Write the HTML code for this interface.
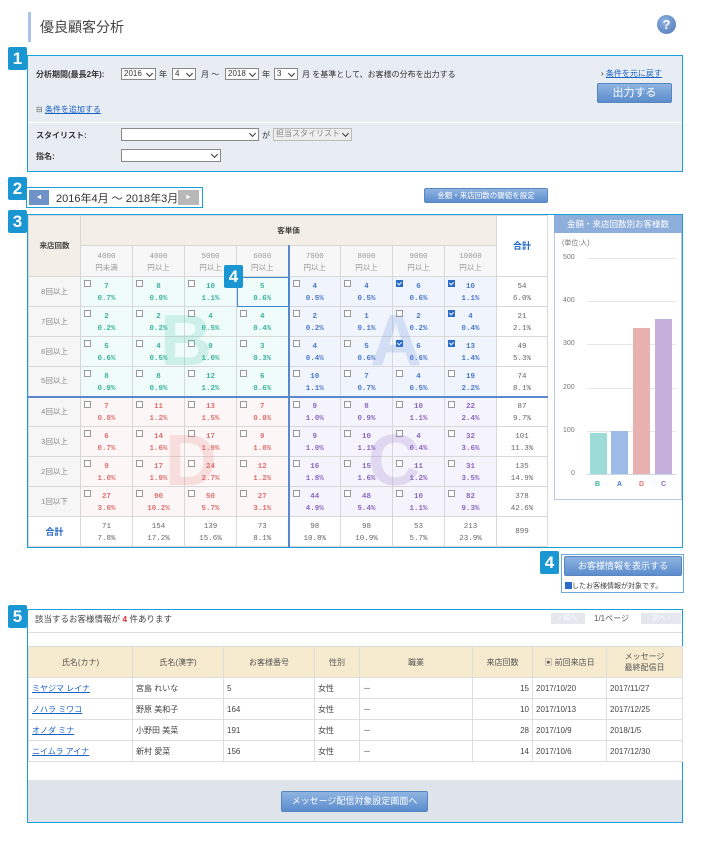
<!DOCTYPE html>
<html><head><meta charset="utf-8">
<style>
*{box-sizing:border-box;margin:0;padding:0}
body{width:710px;height:844px;background:#fff;font-family:"Liberation Sans","Noto Sans CJK JP",sans-serif;color:#333;position:relative;overflow:hidden;font-size:8px}
.abs{position:absolute}
.badge{position:absolute;width:19px;height:23px;background:#1a96d2;color:#fff;font-size:17px;font-weight:bold;text-align:center;line-height:23px;border-radius:2px;z-index:5}
.box{position:absolute;border:1px solid #1aa0d8}
.sel{position:absolute;height:12px;border:1px solid #888;background:#fff;font-size:8px;line-height:10px;padding-left:2px}
.sel:after{content:"";position:absolute;right:3px;top:2px;width:4px;height:4px;border-right:1.5px solid #333;border-bottom:1.5px solid #333;transform:rotate(45deg)}
.btn{position:absolute;background:linear-gradient(#8fb4e2,#5b8ccc);color:#fff;text-align:center;border-radius:2px;border:1px solid #5a86c0}
a,.lk{color:#1a62c4;text-decoration:underline}
table.g{position:absolute;left:28px;top:215px;border-collapse:collapse;table-layout:fixed;font-family:"Liberation Mono","Noto Sans CJK JP",monospace}
table.g td{border:1px solid #d8d8d8;height:30px;text-align:center;font-size:7.5px;line-height:12px;position:relative;font-weight:bold;padding-top:3px}
table.g td i{position:absolute;left:3px;top:3px;width:7px;height:7px;border:1px solid #999;background:#fff}
table.g td i.k{border-color:#2a6cc8;background:#2a6cc8}
table.g td i.k:after{content:"";position:absolute;left:1px;top:0;width:2px;height:3px;border-right:1px solid #fff;border-bottom:1px solid #fff;transform:rotate(45deg)}
td.rh{background:#f6f6f6;color:#888;font-weight:normal!important;font-family:"Liberation Sans","Noto Sans CJK JP",sans-serif;padding-top:0!important}
td.b{background:#f0fcfa;color:#3bb39d}
td.a{background:#f0f4fd;color:#4a78cc}
td.d{background:#fdf6f6;color:#e07070}
td.c{background:#f5f3fc;color:#8a68c2}
td.t{color:#666;font-weight:normal!important}
tr.sep td{border-top:2px solid #5b88cc}
td.vs{border-left:2px solid #5b88cc!important}
.big{position:absolute;font-size:72px;font-weight:bold;font-family:"Liberation Sans",sans-serif;z-index:1;pointer-events:none}
table.c{position:absolute;left:28px;top:646px;width:654px;border-collapse:collapse;table-layout:fixed;font-size:8px}
table.c td,table.c th{border:1px solid #ddd;height:21px;padding:0 3px;text-align:left;font-weight:normal;color:#444;overflow:hidden;white-space:nowrap}
table.c th{background:#f6ebcf;height:31px;text-align:center;color:#555}
</style></head><body>

<div class="abs" style="left:28px;top:12px;width:3px;height:30px;background:#a9c4e8"></div>
<div class="abs" style="left:40px;top:17px;font-size:14px;color:#444">優良顧客分析</div>
<div class="abs" style="left:657px;top:15px;width:19px;height:19px;border-radius:50%;background:radial-gradient(circle at 40% 35%,#8fb2e0,#4a74b6);color:#fff;font-size:13px;font-weight:bold;text-align:center;line-height:19px">?</div>

<div class="badge" style="left:8px;top:47px">1</div>
<div class="box" style="left:27px;top:55px;width:656px;height:117px;background:#e8ecf3"></div>
<div class="abs" style="left:36px;top:69px;font-weight:bold;font-size:8px">分析期間(最長2年):</div>
<div class="sel" style="left:121px;top:68px;width:35px">2016</div>
<div class="abs" style="left:159px;top:69px">年</div>
<div class="sel" style="left:172px;top:68px;width:24px">4</div>
<div class="abs" style="left:201px;top:69px">月 ～</div>
<div class="sel" style="left:225px;top:68px;width:34px">2018</div>
<div class="abs" style="left:262px;top:69px">年</div>
<div class="sel" style="left:274px;top:68px;width:24px">3</div>
<div class="abs" style="left:302px;top:69px">月 を基準として、お客様の分布を出力する</div>
<div class="abs" style="left:601px;top:68px;font-size:8px">› <span class="lk">条件を元に戻す</span></div>
<div class="btn" style="left:597px;top:83px;width:75px;height:20px;font-size:11px;line-height:18px">出力する</div>
<div class="abs" style="left:36px;top:104px;color:#666">⊟ <span class="lk">条件を追加する</span></div>
<div class="abs" style="left:28px;top:122px;width:654px;height:1px;background:#fff"></div>
<div class="abs" style="left:36px;top:130px;font-weight:bold">スタイリスト:</div>
<div class="sel" style="left:121px;top:128px;width:138px;height:13px"></div>
<div class="abs" style="left:262px;top:130px">が</div>
<div class="sel" style="left:273px;top:128px;width:79px;height:13px;background:#eee;border-color:#bbb;color:#888">担当スタイリスト</div>
<div class="abs" style="left:36px;top:151px;font-weight:bold">指名:</div>
<div class="sel" style="left:121px;top:149px;width:100px;height:13px"></div>

<div class="badge" style="left:8px;top:177px">2</div>
<div class="box" style="left:26px;top:187px;width:177px;height:21px"></div>
<div class="abs" style="left:29px;top:190px;width:20px;height:15px;background:#6f92c8;color:#fff;font-size:7px;text-align:center;line-height:15px">◄</div>
<div class="abs" style="left:56px;top:190px;font-size:11px;color:#333">2016年4月 ～ 2018年3月</div>
<div class="abs" style="left:178px;top:190px;width:21px;height:15px;background:#b8b8b8;color:#fff;font-size:7px;text-align:center;line-height:15px">►</div>
<div class="btn" style="left:424px;top:188px;width:124px;height:15px;font-size:7.5px;line-height:13px">金額・来店回数の閾値を設定</div>

<div class="badge" style="left:8px;top:210px">3</div>
<div class="box" style="left:27px;top:214px;width:656px;height:334px"></div>
<div class="big" style="left:160px;top:300px;color:rgba(80,200,180,.22)">B</div>
<div class="big" style="left:370px;top:300px;color:rgba(90,130,220,.2)">A</div>
<div class="big" style="left:165px;top:420px;color:rgba(230,110,110,.18)">D</div>
<div class="big" style="left:368px;top:420px;color:rgba(140,110,200,.2)">C</div>
<table class="g">
<colgroup><col style="width:52px"><col style="width:52px"><col style="width:52px"><col style="width:52px"><col style="width:52px"><col style="width:52px"><col style="width:52px"><col style="width:52px"><col style="width:52px"><col style="width:51px"></colgroup>
<tr><td rowspan="2" class="rh" style="background:#f3efe6;color:#444;font-weight:bold!important">来店回数</td><td colspan="8" style="background:#f3efe6;color:#444;font-family:'Liberation Sans','Noto Sans CJK JP',sans-serif;height:30px;padding:0">客単価</td><td rowspan="2" style="background:#fff;color:#1a62c4;font-size:9px;font-family:'Liberation Sans','Noto Sans CJK JP',sans-serif;padding:0">合計</td></tr>
<tr style="height:31px"><td class="t" style="background:#f7f7f7;color:#999">4000<br>円未満</td><td class="t" style="background:#f7f7f7;color:#999">4000<br>円以上</td><td class="t" style="background:#f7f7f7;color:#999">5000<br>円以上</td><td class="t" style="background:#f7f7f7;color:#999">6000<br>円以上</td><td class="t vs" style="background:#f7f7f7;color:#999">7000<br>円以上</td><td class="t" style="background:#f7f7f7;color:#999">8000<br>円以上</td><td class="t" style="background:#f7f7f7;color:#999">9000<br>円以上</td><td class="t" style="background:#f7f7f7;color:#999">10000<br>円以上</td></tr>
<tr><td class="rh">8回以上</td><td class="b"><i></i>7<br>0.7%</td><td class="b"><i></i>8<br>0.9%</td><td class="b"><i></i>10<br>1.1%</td><td class="b" style="outline:1.5px solid #3a8ad8;outline-offset:-1px">5<br>0.6%</td><td class="a vs"><i></i>4<br>0.5%</td><td class="a"><i></i>4<br>0.5%</td><td class="a"><i class="k"></i>6<br>0.6%</td><td class="a"><i class="k"></i>10<br>1.1%</td><td class="t">54<br>6.0%</td></tr>
<tr><td class="rh">7回以上</td><td class="b"><i></i>2<br>0.2%</td><td class="b"><i></i>2<br>0.2%</td><td class="b"><i></i>4<br>0.5%</td><td class="b"><i></i>4<br>0.4%</td><td class="a vs"><i></i>2<br>0.2%</td><td class="a"><i></i>1<br>0.1%</td><td class="a"><i></i>2<br>0.2%</td><td class="a"><i class="k"></i>4<br>0.4%</td><td class="t">21<br>2.1%</td></tr>
<tr><td class="rh">6回以上</td><td class="b"><i></i>5<br>0.6%</td><td class="b"><i></i>4<br>0.5%</td><td class="b"><i></i>9<br>1.0%</td><td class="b"><i></i>3<br>0.3%</td><td class="a vs"><i></i>4<br>0.4%</td><td class="a"><i></i>5<br>0.6%</td><td class="a"><i class="k"></i>6<br>0.6%</td><td class="a"><i class="k"></i>13<br>1.4%</td><td class="t">49<br>5.3%</td></tr>
<tr><td class="rh">5回以上</td><td class="b"><i></i>8<br>0.9%</td><td class="b"><i></i>8<br>0.9%</td><td class="b"><i></i>12<br>1.2%</td><td class="b"><i></i>6<br>0.6%</td><td class="a vs"><i></i>10<br>1.1%</td><td class="a"><i></i>7<br>0.7%</td><td class="a"><i></i>4<br>0.5%</td><td class="a"><i></i>19<br>2.2%</td><td class="t">74<br>8.1%</td></tr>
<tr class="sep"><td class="rh">4回以上</td><td class="d"><i></i>7<br>0.8%</td><td class="d"><i></i>11<br>1.2%</td><td class="d"><i></i>13<br>1.5%</td><td class="d"><i></i>7<br>0.8%</td><td class="c vs"><i></i>9<br>1.0%</td><td class="c"><i></i>8<br>0.9%</td><td class="c"><i></i>10<br>1.1%</td><td class="c"><i></i>22<br>2.4%</td><td class="t">87<br>9.7%</td></tr>
<tr><td class="rh">3回以上</td><td class="d"><i></i>6<br>0.7%</td><td class="d"><i></i>14<br>1.6%</td><td class="d"><i></i>17<br>1.9%</td><td class="d"><i></i>9<br>1.0%</td><td class="c vs"><i></i>9<br>1.0%</td><td class="c"><i></i>10<br>1.1%</td><td class="c"><i></i>4<br>0.4%</td><td class="c"><i></i>32<br>3.6%</td><td class="t">101<br>11.3%</td></tr>
<tr><td class="rh">2回以上</td><td class="d"><i></i>9<br>1.0%</td><td class="d"><i></i>17<br>1.9%</td><td class="d"><i></i>24<br>2.7%</td><td class="d"><i></i>12<br>1.2%</td><td class="c vs"><i></i>16<br>1.8%</td><td class="c"><i></i>15<br>1.6%</td><td class="c"><i></i>11<br>1.2%</td><td class="c"><i></i>31<br>3.5%</td><td class="t">135<br>14.9%</td></tr>
<tr><td class="rh">1回以下</td><td class="d"><i></i>27<br>3.0%</td><td class="d"><i></i>90<br>10.2%</td><td class="d"><i></i>50<br>5.7%</td><td class="d"><i></i>27<br>3.1%</td><td class="c vs"><i></i>44<br>4.9%</td><td class="c"><i></i>48<br>5.4%</td><td class="c"><i></i>10<br>1.1%</td><td class="c"><i></i>82<br>9.3%</td><td class="t">378<br>42.6%</td></tr>
<tr><td class="rh" style="background:#fff;color:#1a62c4;font-weight:bold!important;font-size:9px">合計</td><td class="t">71<br>7.8%</td><td class="t">154<br>17.2%</td><td class="t">139<br>15.6%</td><td class="t">73<br>8.1%</td><td class="t vs">98<br>10.8%</td><td class="t">98<br>10.9%</td><td class="t">53<br>5.7%</td><td class="t">213<br>23.9%</td><td class="t" style="padding-top:0">899</td></tr>
</table>
<div class="badge" style="left:224px;top:265px">4</div>

<div class="abs" style="left:554px;top:215px;width:128px;height:285px;border:1px solid #b8c8e0;background:#fff"></div>
<div class="abs" style="left:554px;top:215px;width:128px;height:18px;background:#8eaedc;color:#fff;font-size:8.5px;text-align:center;line-height:18px">金額・来店回数別お客様数</div>
<div class="abs" style="left:562px;top:238px;color:#777;font-size:7px">(単位:人)</div>
<div class="abs" style="left:563px;top:254px;color:#777;font-size:7px;line-height:8px">500</div>
<div class="abs" style="left:563px;top:297px;color:#777;font-size:7px;line-height:8px">400</div>
<div class="abs" style="left:563px;top:340px;color:#777;font-size:7px;line-height:8px">300</div>
<div class="abs" style="left:563px;top:384px;color:#777;font-size:7px;line-height:8px">200</div>
<div class="abs" style="left:563px;top:427px;color:#777;font-size:7px;line-height:8px">100</div>
<div class="abs" style="left:571px;top:470px;color:#777;font-size:7px;line-height:8px">0</div>
<div class="abs" style="left:587px;top:258px;width:89px;height:1px;background:#e6e6e6"></div>
<div class="abs" style="left:587px;top:301px;width:89px;height:1px;background:#e6e6e6"></div>
<div class="abs" style="left:587px;top:344px;width:89px;height:1px;background:#e6e6e6"></div>
<div class="abs" style="left:587px;top:388px;width:89px;height:1px;background:#e6e6e6"></div>
<div class="abs" style="left:587px;top:431px;width:89px;height:1px;background:#e6e6e6"></div>
<div class="abs" style="left:587px;top:474px;width:89px;height:1px;background:#ccd6e6"></div>
<div class="abs" style="left:590px;top:433px;width:17px;height:41px;background:#9ddcd6"></div>
<div class="abs" style="left:611px;top:431px;width:17px;height:43px;background:#9dbbe6"></div>
<div class="abs" style="left:633px;top:328px;width:17px;height:146px;background:#e8b0ae"></div>
<div class="abs" style="left:655px;top:319px;width:17px;height:155px;background:#c4b0da"></div>
<div class="abs" style="left:595px;top:481px;color:#3bb39d;font-size:7px;font-weight:bold">B</div>
<div class="abs" style="left:617px;top:481px;color:#4a78cc;font-size:7px;font-weight:bold">A</div>
<div class="abs" style="left:639px;top:481px;color:#e07070;font-size:7px;font-weight:bold">D</div>
<div class="abs" style="left:661px;top:481px;color:#8a68c2;font-size:7px;font-weight:bold">C</div>

<div class="badge" style="left:540px;top:551px">4</div>
<div class="box" style="left:561px;top:554px;width:123px;height:39px;border-color:#6aa8e0"></div>
<div class="btn" style="left:564px;top:556px;width:118px;height:20px;font-size:9px;line-height:18px">お客様情報を表示する</div>
<div class="abs" style="left:565px;top:581px;font-size:7px;color:#444"><span style="display:inline-block;width:7px;height:7px;background:#2a6cc8;vertical-align:-1px"></span>したお客様情報が対象です。</div>

<div class="badge" style="left:8px;top:605px">5</div>
<div class="box" style="left:27px;top:609px;width:656px;height:214px"></div>
<div class="abs" style="left:35px;top:613px;font-size:8.5px;color:#444">該当するお客様情報が <b style="color:#e03030">4</b> 件あります</div>
<div class="abs" style="left:551px;top:613px;width:34px;height:11px;background:#e4e8ee;color:#fff;font-size:7px;text-align:center;line-height:11px">‹ 前へ</div>
<div class="abs" style="left:594px;top:613px;font-size:8px;color:#555">1/1ページ</div>
<div class="abs" style="left:641px;top:613px;width:40px;height:11px;background:#e4e8ee;color:#fff;font-size:7px;text-align:center;line-height:11px">次へ ›</div>
<div class="abs" style="left:28px;top:632px;width:654px;height:1px;background:#ddd"></div>
<table class="c">
<colgroup><col style="width:104px"><col style="width:91px"><col style="width:91px"><col style="width:45px"><col style="width:113px"><col style="width:60px"><col style="width:74px"><col style="width:76px"></colgroup>
<tr><th>氏名(カナ)</th><th>氏名(漢字)</th><th>お客様番号</th><th>性別</th><th>職業</th><th>来店回数</th><th style="padding:0">▣ 前回来店日</th><th>メッセージ<br>最終配信日</th></tr>
<tr><td><a>ミヤジマ レイナ</a></td><td>宮島 れいな</td><td>5</td><td>女性</td><td>－</td><td style="text-align:right">15</td><td>2017/10/20</td><td>2017/11/27</td></tr>
<tr><td><a>ノハラ ミワコ</a></td><td>野原 美和子</td><td>164</td><td>女性</td><td>－</td><td style="text-align:right">10</td><td>2017/10/13</td><td>2017/12/25</td></tr>
<tr><td><a>オノダ ミナ</a></td><td>小野田 美菜</td><td>191</td><td>女性</td><td>－</td><td style="text-align:right">28</td><td>2017/10/9</td><td>2018/1/5</td></tr>
<tr><td><a>ニイムラ アイナ</a></td><td>新村 愛菜</td><td>156</td><td>女性</td><td>－</td><td style="text-align:right">14</td><td>2017/10/6</td><td>2017/12/30</td></tr>
</table>
<div class="abs" style="left:28px;top:780px;width:654px;height:42px;background:#dfe3ea"></div>
<div class="btn" style="left:281px;top:791px;width:147px;height:21px;font-size:9px;line-height:19px">メッセージ配信対象設定画面へ</div>
</body></html>
